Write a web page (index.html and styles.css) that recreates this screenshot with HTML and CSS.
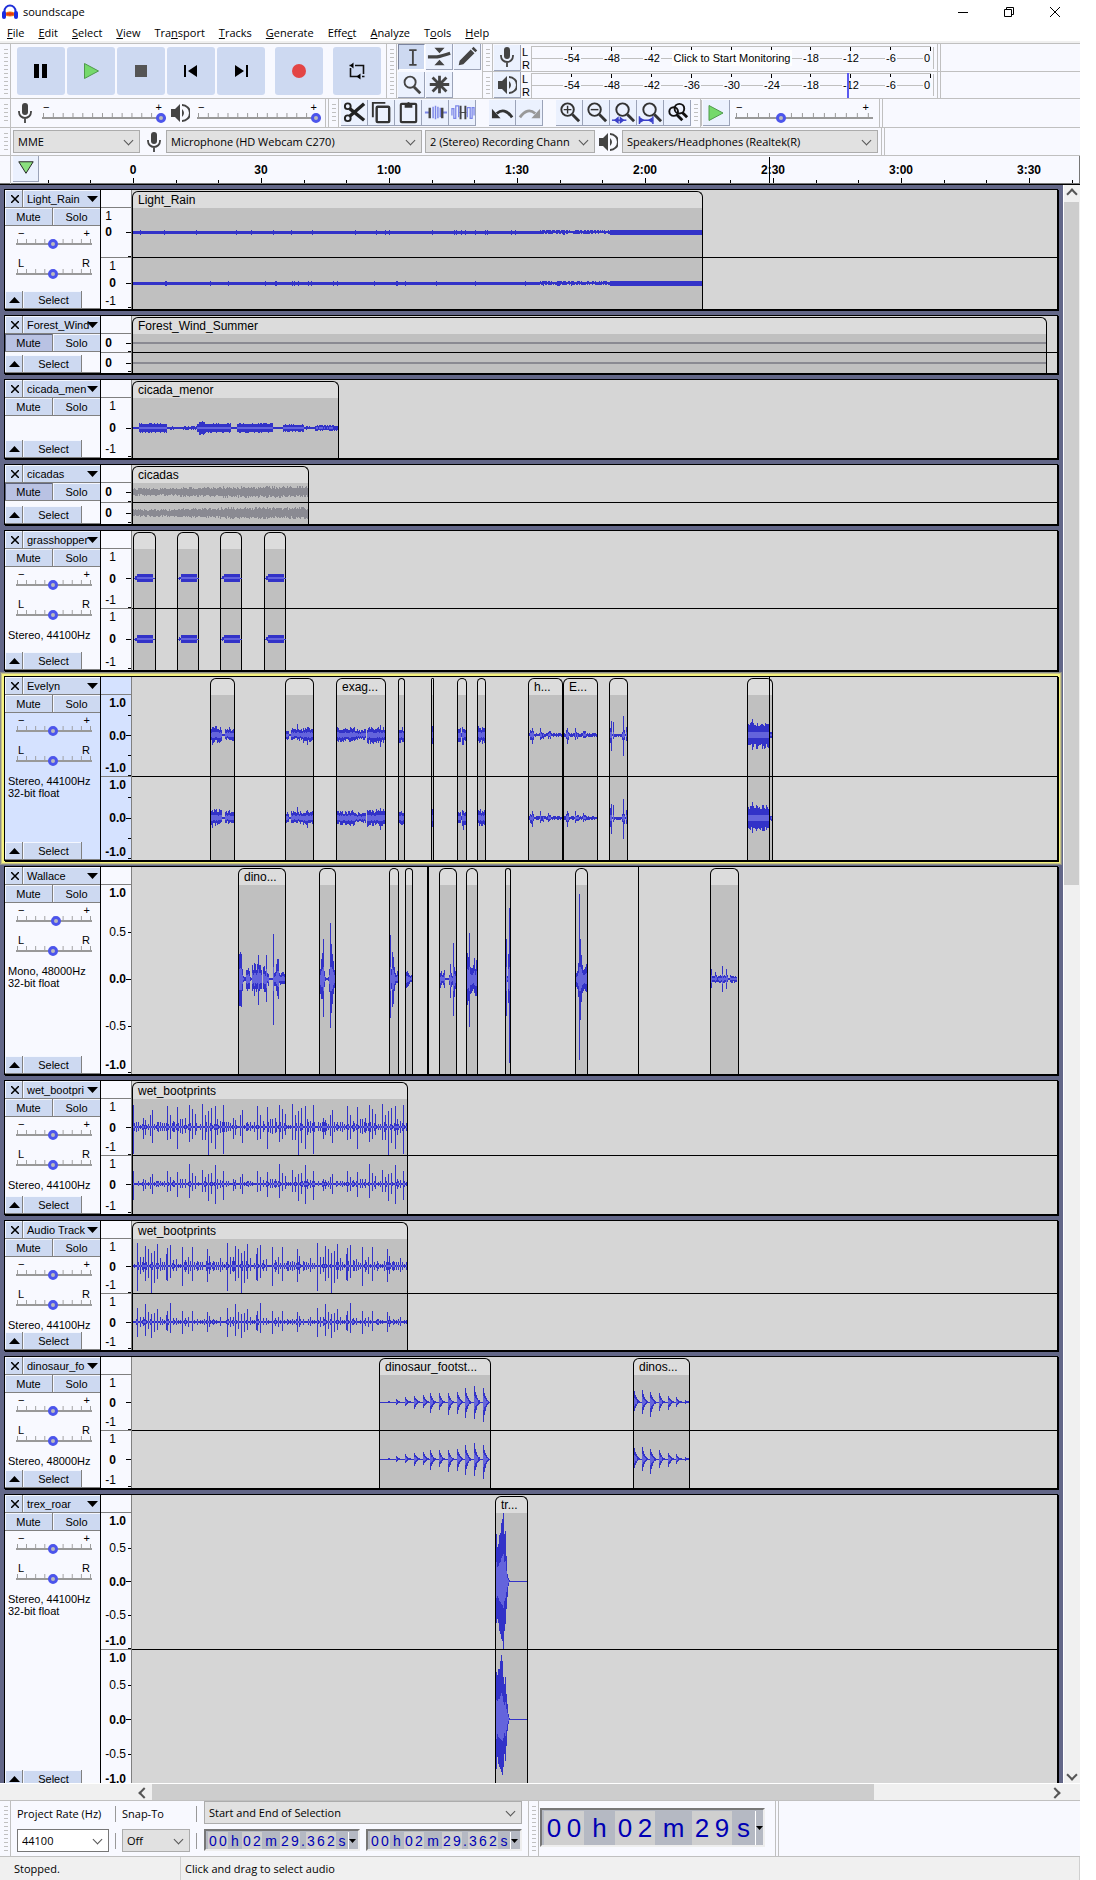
FILE: index.html
```html
<!DOCTYPE html>
<html lang="en">
<head>
<meta charset="utf-8">
<title>soundscape</title>
<link rel="stylesheet" href="styles.css">
</head>
<body>
<svg class="defs" aria-hidden="true">
  <symbol id="mic" viewBox="0 0 16 22"><rect x="5" y="1" width="6" height="12" rx="3" fill="#444"/><path d="M2 9v1a6 6 0 0 0 12 0V9M8 16v5" fill="none" stroke="#444" stroke-width="1.8"/></symbol>
  <symbol id="speaker" viewBox="0 0 20 20"><path d="M1 6h4l5-5v18l-5-5H1z" fill="#444"/><path d="M12 6q4 4 0 8" fill="#444"/><path d="M12 2a8 8 0 0 1 0 16" fill="none" stroke="#444" stroke-width="2"/></symbol>
  <symbol id="play" viewBox="0 0 18 18"><path d="M2 1.500L16 9L2 16.500z" fill="#75d96b" stroke="#4f9a4c"/></symbol>
  <symbol id="lens" viewBox="0 0 26 26"><circle cx="11" cy="10" r="6.500" fill="none" stroke="#333" stroke-width="2"/><path d="M16 15l7 7" stroke="#333" stroke-width="3"/></symbol>
</svg>
<div class="app">
  <header class="titlebar">
    <svg class="logo" viewBox="0 0 16 16"><path d="M2.500 9V7a5.500 5.500 0 0 1 11 0v2" fill="none" stroke="#1f2fd8" stroke-width="2"/><ellipse cx="8" cy="10" rx="5" ry="2.500" fill="#f58a1c"/><path d="M4 10h8M6 8.500v3M8 8v4M10 8.500v3" stroke="#e02010"/><rect x="0" y="7" width="4" height="8" rx="2" fill="#1a2be0"/><rect x="12" y="7" width="4" height="8" rx="2" fill="#1a2be0"/></svg>
    <h1>soundscape</h1>
    <div class="winbtns">
      <button aria-label="Minimize"><svg viewBox="0 0 12 12"><path d="M1 6.500h10"/></svg></button>
      <button aria-label="Restore"><svg viewBox="0 0 12 12"><path d="M1.500 3.500h7v7h-7zM3.500 3.500v-2h7v7h-2"/></svg></button>
      <button aria-label="Close"><svg viewBox="0 0 12 12"><path d="M1 1l10 10M11 1L1 11"/></svg></button>
    </div>
  </header>
  <nav class="menu">
    <a href="#"><u>F</u>ile</a><a href="#"><u>E</u>dit</a><a href="#"><u>S</u>elect</a><a href="#"><u>V</u>iew</a><a href="#">Tra<u>n</u>sport</a><a href="#"><u>T</u>racks</a><a href="#"><u>G</u>enerate</a><a href="#">Effe<u>c</u>t</a><a href="#"><u>A</u>nalyze</a><a href="#">T<u>o</u>ols</a><a href="#"><u>H</u>elp</a>
  </nav>

  <div class="bar bar-main">
    <i class="grip"></i>
    <div class="transport">
      <button aria-label="Pause"><svg viewBox="0 0 48 48"><path d="M17 17h5v14h-5zM25 17h5v14h-5z"/></svg></button>
      <button aria-label="Play"><svg viewBox="0 0 48 48"><path d="M17.500 16.500l14 7.500-14 7.500z" fill="#75d96b" stroke="#4f9a4c"/></svg></button>
      <button aria-label="Stop"><svg viewBox="0 0 48 48"><path d="M18 18h12v12H18z" fill="#555"/></svg></button>
      <button aria-label="Skip to start"><svg viewBox="0 0 48 48"><path d="M17 18h2v12h-2zM30 18v12l-9-6z"/></svg></button>
      <button aria-label="Skip to end"><svg viewBox="0 0 48 48"><path d="M29 18h2v12h-2zM18 18v12l9-6z"/></svg></button>
      <button class="apart" aria-label="Record"><svg viewBox="0 0 48 48"><circle cx="24" cy="24" r="7" fill="#e34545"/></svg></button>
      <button class="apart" aria-label="Loop"><svg viewBox="0 0 48 48"><path d="M22 18.500h8.500V27M26 29.500h-8.500V21M19 18.500h-2.500M29 29.500h2.500" fill="none" stroke="#111" stroke-width="1.600"/><path d="M20.500 15.500v6l-3.500-3zM27.500 26.500v6l-4-3z" transform="translate(0 0)"/></svg></button>
    </div>
    <i class="grip"></i>
    <div class="tools">
      <button class="on" aria-label="Selection"><svg viewBox="0 0 27 27"><path d="M11 5.500h8M11 21.500h8M15 5v17" stroke="#444" stroke-width="2" fill="none"/></svg></button>
      <button aria-label="Envelope"><svg viewBox="0 0 27 27"><path d="M8 4h11l-5.500 6zM8 23h11l-5.500-6z" fill="#444"/><path d="M1 14h10q5-1 14-4" stroke="#444" stroke-width="3.500" fill="none"/></svg></button>
      <button aria-label="Draw"><svg viewBox="0 0 27 27"><path d="M4 23l1-5L17 6l4 4L9 22zM18 5l2-2 4 4-2 2z" fill="#444"/></svg></button>
      <button aria-label="Zoom"><svg viewBox="0 0 27 27"><circle cx="12" cy="11" r="6" fill="none" stroke="#444" stroke-width="2"/><path d="M16 16l7 7" stroke="#444" stroke-width="3"/></svg></button>
      <button aria-label="Multi-tool"><svg viewBox="0 0 27 27"><path d="M13.500 4v19M3 13.500h21M6 6l15 15M21 6L6 21" stroke="#444" stroke-width="3"/></svg></button>
    </div>
    <div class="meters">
      <div class="meter">
        <i class="grip"></i>
        <button class="tool" aria-label="Recording level"><svg width="16" height="22"><use href="#mic"/></svg></button>
        <div class="lr"><span>L</span><span>R</span></div>
        <svg class="scale" data-skip="1" width="406" height="26"></svg>
        <button class="monitor">Click to Start Monitoring</button>
        <i class="ends"></i>
      </div>
      <div class="meter">
        <i class="grip"></i>
        <button class="tool" aria-label="Playback level"><svg width="20" height="20"><use href="#speaker"/></svg></button>
        <div class="lr"><span>L</span><span>R</span></div>
        <svg class="scale" width="406" height="26"></svg>
        <i class="ends"></i>
      </div>
    </div>
  </div>

  <div class="bar bar-edit">
    <i class="grip"></i>
    <div class="mixer">
      <svg width="16" height="22"><use href="#mic"/></svg>
      <label class="slider wide"><span><b>−</b><b>+</b></span><input type="range" value="100" aria-label="Recording volume"></label>
      <svg width="20" height="20"><use href="#speaker"/></svg>
      <label class="slider wide"><span><b>−</b><b>+</b></span><input type="range" value="100" aria-label="Playback volume"></label>
    </div>
    <i class="ends"></i>
    <i class="grip"></i>
    <div class="edit">
      <button class="tool" aria-label="Cut"><svg viewBox="0 0 26 26"><path d="M8 9l15 12M8 17L23 4" stroke="#222" stroke-width="3.500"/><circle cx="6" cy="6.500" r="3" fill="none" stroke="#222" stroke-width="2"/><circle cx="6" cy="19" r="3" fill="none" stroke="#222" stroke-width="2"/></svg></button>
      <button class="tool" aria-label="Copy"><svg viewBox="0 0 26 26"><path d="M4 18V3h13" stroke="#333" stroke-width="2" fill="none"/><rect x="8" y="7" width="13" height="16" rx="1" fill="none" stroke="#333" stroke-width="2.500"/></svg></button>
      <button class="tool" aria-label="Paste"><svg viewBox="0 0 26 26"><rect x="5" y="4" width="16" height="19" rx="1" fill="none" stroke="#333" stroke-width="2.200"/><path d="M9 4h2q2-4 4 0h2v4H9z" fill="#333"/></svg></button>
      <button class="tool" aria-label="Trim"><svg viewBox="0 0 26 26"><path d="M2 13h5M19 13h6" stroke="#7b86e8" stroke-width="2"/><path d="M7 8v11M20 8v11" stroke="#444" stroke-width="2.500"/><path d="M10.500 7v12M13 6v14M15.500 7v12M18 8v10" stroke="#7b86e8" stroke-width="1.500"/></svg></button>
      <button class="tool" aria-label="Silence"><svg viewBox="0 0 26 26"><path d="M10 13h7" stroke="#444"/><path d="M11 6v14M16 6v14" stroke="#444" stroke-width="2"/><path d="M2 16V9h2v10h2V6h3v12M18 18V8h3v11h2V8h2v8" fill="none" stroke="#7b86e8" stroke-width="1.300"/></svg></button>
      <button class="tool undo" aria-label="Undo"><svg viewBox="0 0 26 26"><path d="M7 14q8-7 16 4" stroke="#333" stroke-width="3" fill="none"/><path d="M2 9v10h9z" fill="#333"/></svg></button>
      <button class="tool" aria-label="Redo"><svg viewBox="0 0 26 26"><path d="M19 14q-8-7-16 4" stroke="#999" stroke-width="3" fill="none"/><path d="M24 9v10h-9z" fill="#999"/></svg></button>
      <button class="tool undo" aria-label="Zoom in"><svg viewBox="0 0 26 26"><use href="#lens"/><path d="M7 10h8M11 6v8" stroke="#333" stroke-width="1.500"/></svg></button>
      <button class="tool" aria-label="Zoom out"><svg viewBox="0 0 26 26"><use href="#lens"/><path d="M7 10h8" stroke="#333" stroke-width="1.500"/></svg></button>
      <button class="tool" aria-label="Fit selection"><svg viewBox="0 0 26 26"><use href="#lens" x="1"/><path d="M1 21h15" stroke="#3a3fc8" stroke-width="1.500"/><path d="M8 17v8l-5-4zM9 17v8l5-4z" fill="#3a3fc8"/></svg></button>
      <button class="tool" aria-label="Fit project"><svg viewBox="0 0 26 26"><use href="#lens" x="1"/><path d="M2 21h13M1.500 17v8M15.500 17v8" stroke="#3a3fc8" stroke-width="1.500"/><path d="M2 18l5 3-5 3zM15 18l-5 3 5 3z" fill="#3a3fc8"/></svg></button>
      <button class="tool" aria-label="Zoom toggle"><svg viewBox="0 0 26 26"><circle cx="9" cy="12" r="4.500" fill="none" stroke="#111" stroke-width="2"/><circle cx="15" cy="9" r="5" fill="none" stroke="#111" stroke-width="2"/><path d="M12 15l6 6M18 13l5 5" stroke="#111" stroke-width="3"/></svg></button>
    </div>
    <i class="grip"></i>
    <div class="speed">
      <button class="tool" aria-label="Play at speed"><svg width="18" height="18"><use href="#play"/></svg></button>
      <label class="slider wide"><span><b>−</b><b>+</b></span><input type="range" value="32" aria-label="Playback speed"></label>
    </div>
    <i class="ends"></i>
  </div>

  <div class="bar bar-device">
    <i class="grip"></i>
    <span class="pick host"><select aria-label="Audio host"><option>MME</option></select></span>
    <svg width="16" height="22"><use href="#mic"/></svg>
    <span class="pick dev"><select aria-label="Recording device"><option>Microphone (HD Webcam C270)</option></select></span>
    <span class="pick chan"><select aria-label="Recording channels"><option>2 (Stereo) Recording Chann</option></select></span>
    <svg width="20" height="20"><use href="#speaker"/></svg>
    <span class="pick dev"><select aria-label="Playback device"><option>Speakers/Headphones (Realtek(R)</option></select></span>
    <i class="ends"></i>
  </div>

  <div class="timeline">
    <i class="stub"></i>
    <button class="tool pin" aria-label="Pinned play head"><svg viewBox="0 0 26 26"><path d="M6 6h15l-7.500 12z" fill="#8be07f" stroke="#222"/></svg></button>
    <svg class="ruler" id="ruler" height="27"></svg>
  </div>

  <main class="workspace">
    <div class="tracks" id="tracks"></div>
    <div class="vscroll"><i class="arrow up"></i><i class="thumb"></i><i class="arrow down"></i></div>
  </main>
  <div class="hscroll"><i class="arrow left"></i><i class="thumb"></i><i class="arrow right"></i></div>

  <div class="selection">
    <i class="grip"></i>
    <div class="setup">
      <label for="rate">Project Rate (Hz)</label><i class="bar-v"></i><label for="snap">Snap-To</label><i class="bar-v"></i>
      <span class="pick field"><input id="rate" type="text" value="44100"></span><i class="bar-v"></i><span class="pick"><select id="snap"><option>Off</option></select></span><i class="bar-v"></i>
    </div>
    <div class="range">
      <span class="pick"><select aria-label="Selection mode"><option>Start and End of Selection</option></select></span>
      <div class="times"><div class="time small" data-t="00|h|02|m|29|.|362|s"></div><div class="time small" data-t="00|h|02|m|29|.|362|s"></div></div>
    </div>
    <i class="grip framed"></i>
    <div class="time big" data-t="00|h|02|m|29|s"></div>
    <i class="ends"></i>
  </div>
  <footer class="status"><span></span><span>Stopped.</span><span>Click and drag to select audio</span></footer>
</div>
<script src="app.js"></script>
</body>
</html>
```
FILE: styles.css
```css
* { box-sizing: border-box; }
body { margin: 0; background: #fff; color: #000; font: 11px/14px "Open Sans", "Noto Sans", sans-serif; }
button, select, input { font: inherit; color: inherit; margin: 0; padding: 0; border: 0; background: none; border-radius: 0; }
button { display: flex; align-items: center; justify-content: center; }
svg { display: block; flex: none; }
.defs { position: absolute; width: 0; height: 0; }
.app { display: flex; flex-direction: column; height: 100vh; margin-right: 16px; }

.titlebar { display: flex; align-items: center; height: 24px; padding-left: 2px; gap: 5px; }
.titlebar h1 { margin: 0; font-size: 11px; font-weight: 400; flex: 1; }
.logo { width: 16px; height: 16px; }
.winbtns { display: flex; padding-right: 2px; }
.winbtns button { width: 46px; height: 20px; }
.winbtns svg { width: 12px; height: 12px; fill: none; stroke: #000; }
.menu { display: flex; gap: 14px; height: 20px; padding: 0 7px; border-bottom: 1px solid #c0c0c0; box-shadow: inset 0 -2px #f0f0f0; line-height: 18px; }
.menu a { color: #000; text-decoration: none; }

.bar { display: flex; align-items: center; background: #f8f9ff; border-bottom: 1px solid #c0c0c0; }
.grip { flex: none; align-self: stretch; width: 10px; border-right: 1px solid #c0c0c0; background: repeating-linear-gradient(#c0c0c0 0 1px, transparent 1px 4px) content-box; padding: 5px 2px 3px 3px; }
.ends { flex: none; align-self: stretch; width: 4px; border: solid #c0c0c0; border-width: 0 1px; }
.bar > .grip:first-child, .selection > .grip:first-child { width: 11px; padding-left: 4px; }

.bar-main { height: 55px; }
.transport { display: flex; gap: 2px; padding: 0 5px 1px 6px; border-right: 1px solid #c0c0c0; align-self: stretch; align-items: center; }
.transport button { width: 48px; height: 48px; border-radius: 3px; background: #cdd9f1; }
.transport .apart { margin-left: 8px; }
.transport svg { width: 48px; height: 48px; }
.tools { display: grid; grid-template-columns: repeat(3, 27px); gap: 1px; padding: 0 1px; border-right: 1px solid #c0c0c0; align-self: stretch; }
.tools button, .tool { height: 26px; background: #ebf1fe; border-right: 1px solid #9ba3b8; border-bottom: 1px solid #9ba3b8; }
.tools button.on { background: #cdd9f1; border: 1px solid; border-color: #7b849e #fff #fff #7b849e; }
.tools svg { width: 25px; height: 25px; }
.tool { flex: none; width: 27px; }
.meters { flex: 1; align-self: stretch; display: flex; flex-direction: column; }
.meter { display: flex; height: 28px; align-items: center; position: relative; }
.meter:first-child { border-bottom: 1px solid #c0c0c0; }
.meter:last-child { height: 26px; }
.meter .grip { margin-right: 1px; }
.meter .grip + .tool { margin-right: -1px; }
.lr { width: 11px; padding-left: 2px; display: flex; flex-direction: column; font: 11px/14px "Liberation Sans", sans-serif; }
.lr span { height: 13px; }
.scale { font: 11px "Liberation Sans", sans-serif; }
.monitor { position: absolute; left: 189px; top: 6px; width: 120px; height: 16px; background: #fff; font: 11px "Liberation Sans", sans-serif; white-space: nowrap; }

.bar-edit { height: 29px; }
.mixer, .speed { display: flex; align-items: center; }
.mixer { padding: 0 4px 0 6px; gap: 4px; }
.mixer > svg { margin-right: 3px; }
.mixer > svg:first-child { margin-right: 5px; }
.slider { display: flex; flex-direction: column; width: 76px; }
.slider.wide { width: 124px; }
.slider span { display: flex; justify-content: space-between; height: 9px; padding: 0 2px; font: 11px/9px "Liberation Sans", sans-serif; }
.slider b { font-weight: 400; }
.slider.wide span { padding: 0 4px 0 1px; }
.slider input { appearance: none; width: 100%; height: 12px; background:
  linear-gradient(#999, #999) 0 5px / 100% 2px no-repeat,
  linear-gradient(90deg, #999 1px, transparent 1px) 1px 1px / calc((100% - 3px) / 8) 4px repeat-x; }
.slider.wide input { background-size: 100% 2px, calc((100% - 6px) / 12) 4px; }
.slider input::-webkit-slider-thumb { appearance: none; width: 10px; height: 10px; border: 3px solid #4c55ec; border-radius: 50%; background: #bbb; }
.edit { display: flex; padding-left: 2px; }
.edit svg { width: 25px; height: 25px; }
.edit .undo { margin-left: 13px; }
.speed { padding: 0 6px 0 1px; gap: 5px; border-left: 1px solid #c0c0c0; }
.speed .slider { width: 138px; }

.bar-device { height: 28px; }
.pick { position: relative; display: flex; height: 23px; border: 1px solid #acacac; background: #e1e1e1; }
.pick::after { content: ""; position: absolute; right: 7px; top: 6px; width: 6px; height: 6px; border: solid #555; border-width: 0 1px 1px 0; transform: rotate(45deg); pointer-events: none; }
.pick select, .pick input { appearance: none; flex: 1; width: 100%; padding: 0 20px 0 4px; }
.pick.field { background: #fff; border-color: #777; }
.bar-device .host { width: 127px; margin: 0 6px 0 2px; }
.bar-device .dev { width: 256px; margin: 0 3px 0 4px; }
.bar-device .chan { width: 170px; margin-right: 3px; }

.timeline { display: flex; height: 29px; background: #f8f9ff; border-bottom: 1px solid #000; box-shadow: inset 0 -1px #777, inset -1px 0 #777; }
.stub { width: 11px; border-right: 1px solid #c0c0c0; margin-right: 2px; }
.pin { width: 26px; }
.pin svg { width: 25px; height: 25px; }
.ruler { flex: 1; font: bold 12px "Liberation Sans", sans-serif; text-anchor: middle; overflow: hidden; min-width: 0; }

.workspace { flex: 1; min-height: 0; display: flex; background: #636788; }
.tracks { flex: 1; min-width: 0; overflow: hidden; padding: 4px 5px 0 4px; display: flex; flex-direction: column; gap: 5px; font: 11px/12px "Liberation Sans", sans-serif; }
.track { flex: none; display: flex; border: 1px solid #000; box-shadow: 1px 1px #000; background: #f8f9ff; }
.track.focused { background: #d5e2ff; box-shadow: 1px 1px #000, 0 0 0 2px #f6f37f, 0 0 0 3px #c6c287, 0 0 0 4px #8e8f8b; }
.panel { width: 96px; border-right: 1px solid #000; display: flex; flex-direction: column; }
.panel button { background: #cdd9f1; height: 17px; border: solid #808080; border-width: 0 1px 0 0; box-shadow: inset 1px 1px #f4f7ff; }
.head { display: flex; border-bottom: 1px solid #808080; }
.panel .close { width: 18px; padding-left: 2px; }
.panel .name { flex: 1; min-width: 0; justify-content: flex-start; padding-left: 4px; position: relative; overflow: hidden; white-space: nowrap; border-right: 0; }
.name svg { position: absolute; right: 2px; top: 6px; }
.ms { display: flex; border-bottom: 1px solid #808080; }
.ms button { flex: 1; }
.ms button:last-child { border-right: 0; }
.panel .down { background: #b9c2e3; box-shadow: inset 1px 1px #60657c; }
.sliders { display: flex; flex-direction: column; gap: 9px; padding: 3px 0 0 11px; }
.info { margin: 8px 0 0 3px; white-space: pre; }
.foot { display: flex; margin-top: auto; border-bottom: 1px solid #808080; }
.foot .collapse { width: 18px; padding-left: 2px; }
.foot .select { width: 59px; padding-left: 3px; }
.axis { width: 31px; border-right: 1px solid #808080; font-size: 12px; }
.lane { flex: 1; min-width: 0; position: relative; overflow: hidden; background: #d6d6d6; }
.clip { position: absolute; top: 1px; bottom: 0; border: 1px solid #000; border-bottom: 0; border-radius: 6px 6px 0 0; background: linear-gradient(#dcdcdc 16px, #c0c0c0 16px); padding-left: 5px; font-size: 12px; line-height: 16px; white-space: nowrap; overflow: hidden; }
.clip.thin { padding: 0; }
.mark { position: absolute; top: 0; bottom: 0; background: #000; }
.wave { position: absolute; left: 0; top: 0; width: 100%; height: 100%; fill: none; shape-rendering: crispEdges; }
.split { position: absolute; left: 0; right: 0; height: 1px; background: #000; }

.vscroll { width: 17px; border-left: 1px solid #fff; background: #f0f0f0; display: flex; flex-direction: column; }
.arrow { flex: none; width: 16px; height: 17px; display: flex; align-items: center; justify-content: center; }
.arrow::after { content: ""; width: 6px; height: 6px; border: solid #555; border-width: 2px 0 0 2px; }
.up::after { transform: rotate(45deg); }
.down.arrow::after { transform: rotate(225deg); }
.left::after { transform: rotate(-45deg); }
.right::after { transform: rotate(135deg); }
.vscroll .thumb { flex: 683; background: #cdcdcd; margin-right: 1px; }
.vscroll::after { content: ""; flex: 881; order: 1; }
.vscroll .down { order: 2; }
.hscroll { display: flex; height: 17px; background: #f0f0f0; padding: 0 17px 0 136px; border-top: 1px solid #fff; }
.hscroll .thumb { flex: 721; background: #cdcdcd; }
.hscroll::after { content: ""; flex: 173; order: 1; }
.hscroll .right { order: 2; }

.selection { display: flex; align-items: flex-start; height: 57px; background: #f8f9ff; border: solid #c0c0c0; border-width: 1px 0; }
.setup { display: grid; grid-template-columns: 92px 1px 68px 1px; column-gap: 6px; row-gap: 2px; padding: 0 7px 0 6px; align-items: center; font-size: 11px; }
.setup label { line-height: 26px; white-space: nowrap; }
.setup .field { grid-column: 1; }
.bar-v { height: 16px; background: #999; }
.range { display: flex; flex-direction: column; gap: 5px; padding-right: 6px; }
.times { display: flex; gap: 6px; }
.framed { border-left: 1px solid #c0c0c0; width: 11px; }
.time { display: flex; background: #b5b9c3; border: 2px solid; border-color: #777 #eee #eee #777; color: #0000b4; font-family: "Liberation Sans", sans-serif; padding: 1px 0 0 2px; }
.time .num { display: flex; background: #cfcfcf; }
.time span span { text-align: center; }
.time button { width: 8px; border-left: 1px solid #fff; }
.small { width: 156px; height: 22px; font-size: 14px; line-height: 18px; }
.small .num span { width: 10px; }
.small .unit { width: 14px; text-align: center; }
.small .unit.m { width: 18px; }
.small .unit.dot { width: 6px; }
.small .unit.s { width: 12px; }
.big { width: 225px; height: 39px; margin: 7px 10px 0 1px; font-size: 26px; line-height: 34px; }
.big .num span { width: 20px; }
.big .unit { width: 31px; text-align: center; }
.big .unit.m { width: 37px; }
.big .unit.s { width: 23px; }
.status { display: flex; height: 23px; background: #f0f0f0; align-items: center; line-height: 23px; }
.status span { padding-left: 4px; border-right: 1px solid #d0d0d0; }
.status span:nth-child(1) { width: 10px; }
.status span:nth-child(2) { width: 171px; }
.status span:nth-child(3) { flex: 1; }
```
FILE: app.js
```js
// Left edge of the waveform lanes; clip data below is in window pixels.
const ORIGIN = 132;
const BLUE = ['#3232c8', '#6464dc'];
const GREY = ['#8a8a92', '#8a8a92'];

let seed = 7;
function rnd() { seed = (seed * 16807) % 2147483647; return seed / 2147483647; }

// Segment: [x0, x1, up, down, jitter]; later segments replace earlier columns.
function columns(segs) {
  const cols = new Map();
  for (const [x0, x1, up, down, jit = 0.45] of segs) {
    for (let x = x0; x < x1; x++) {
      const j = x1 - x0 > 1 ? 1 - jit * rnd() : 1;
      const k = x1 - x0 > 1 ? 1 - jit * rnd() : 1;
      cols.set(x, [up * j, down * k]);
    }
  }
  return cols;
}
function draw(cols, centre, top, colours, cap = 12) {
  let outer = '', inner = '';
  for (const [x, [u, d]] of cols) {
    const px = x - ORIGIN + 0.5, c = centre - top - 1;
    outer += `M${px} ${c - Math.round(u)}V${c + Math.max(1, Math.round(d))}`;
    if (u + d > 5) inner += `M${px} ${c - Math.round(Math.min(u * 0.4, cap))}V${c + Math.max(1, Math.round(Math.min(d * 0.4, cap)))}`;
  }
  return `<path d="${outer}" stroke="${colours[0]}"/><path d="${inner}" stroke="${colours[1]}"/>`;
}

function rain() {
  const out = [[133, 540, 1, 2, 0], [540, 610, 2, 2, 0.4], [610, 702, 2, 3, 0.1]];
  for (let i = 0; i < 26; i++) { const x = 140 + Math.floor(rnd() * 460); out.push([x, x + 1, 2, 3]); }
  return out;
}
function bootprints(list, scale) {
  const out = [[133, 407, 1, 1, 0]];
  for (let x = 134; x < 407; x += 2) { const a = (1 + rnd() * 4) * scale; out.push([x, x + 1, a, a]); }
  for (let p = -90; p < 280; p += 90) for (const [x, u, d, big] of list) {
    const px = Math.round(x / 3) + p, s = scale < 1 && big ? 0.9 : scale;
    if (px > 132 && px < 407) out.push([px, px + 1, u * s, d * s]);
  }
  return out;
}
const STEPS_A = [[415,5,4],[430,9,12],[436,7,8],[450,12,9],[457,17,16],[470,5,4],[481,5,4],[502,21,13],[511,12,12],[520,6,5],[532,20,22],[541,8,6],[547,8,7],[555,9,6],[568,22,15,1],[577,18,12],[586,13,8],[607,23,13],[616,12,13],[625,16,28],[634,19,16],[644,21,22,1],[652,8,8],[660,6,6],[668,22,27]];
const STEPS_B = [[412,23,25],[421,9,8],[430,9,6],[436,20,15,1],[445,17,12],[454,13,27],[463,15,17],[472,22,13],[481,8,5],[497,12,14],[502,18,15],[511,21,12,1],[520,6,5],[529,7,5],[547,19,20],[556,6,6],[565,9,8],[577,19,15],[592,5,5],[622,17,16],[628,10,8],[640,5,5],[661,8,6]];
function footsteps(start, end, hits) {
  const out = [[start, end, 0, 1, 0]];
  for (const [x, u, d] of hits) [1, 0.65, 0.45, 0.25, 0.15, 0.1].forEach((k, i) => { if (x + i < end) out.push([x + i, x + i + 1, u * k, d * k]); });
  return out;
}
function list(x, ups, downs) { return ups.map((u, i) => [x + i, x + i + 1, u, downs[i]]); }
const chirps = [133, 177, 220, 264].flatMap(x => [[x + 1, x + 22, 0, 1, 0], [x + 2, x + 5, 2, 2], [x + 4, x + 20, 4, 4, 0.1]]);
const speech = [
  [211,222,9,8],[212,213,8,10],[222,225,1,1],[225,234,7,6],[229,230,8,5],
  [286,289,6,6],[289,291,1,1],[291,303,7,6],[297,298,11,5],[303,313,8,8],[307,308,8,10],
  [337,355,8,8],[355,366,6,5],[367,385,9,9],[380,381,10,12],[399,404,8,8],[432,433,9,9],
  [458,461,8,8],[461,462,2,2],[462,464,10,15],[464,466,8,8],[478,485,9,9],
  [529,562,2,2],[530,534,5,6],[532,533,7,9],[540,541,7,5],[541,544,3,4],[548,551,5,4],
  [564,597,2,2],[566,569,6,6],[567,568,7,9],[575,576,7,5],[576,579,3,4],[583,586,5,4],
  [610,627,1,2],[610,612,10,10],[611,612,14,16],[613,614,13,4],[622,625,5,6],[623,624,19,21],[626,627,8,6],
  [748,770,13,14,0.35],[752,753,16,15],[770,772,3,3]];
const wallace = [
  [239,242,27,29,0.1],[242,243,10,12],[243,246,3,3],[246,250,13,13],[250,252,2,2],[252,262,16,17],[258,259,24,26],[263,267,14,15],[266,267,24,23],[267,269,7,7],[269,273,1,1],[273,274,45,46],[274,276,8,8],[276,277,15,12],[277,279,22,20,0.2],[279,285,8,7],
  ...list(320,[10,20,26,40,8,2,1,1,2,10,56,35,25,18,9],[15,20,20,38,8,2,1,1,2,13,49,34,25,15,9]),
  ...list(390,[44,10,27,22,12,6,4,8],[39,10,28,25,12,6,4,4]),...list(406,[7,8,6,4,3,4],[9,8,7,5,3,3]),
  ...list(440,[6,8,4,6,9,1,1,1,1,4,15,6,3,36,12,8],[9,6,4,6,9,1,1,1,1,6,19,8,6,37,18,10]),
  ...list(467,[26,22,46,12,11,11,14,21,10,19],[26,22,48,15,14,12,10,14,17,17]),
  ...list(506,[40,3,25,71],[37,3,24,84]),
  ...list(576,[6,8,16,85,40,24,14,9,10,12,15],[8,10,18,81,41,23,14,12,10,12,13]),
  [711,737,4,4],[711,712,10,9],[715,716,7,4],[722,723,13,13],[726,727,10,10],[728,730,1,1]];
const STEPS_1 = [[388,1,1],[396,3,3],[405,5,4],[414,6,7],[423,7,6],[430,9,11],[439,9,8],[448,9,13],[457,10,12],[465,14,16],[474,16,17],[483,14,20]];
const STEPS_2 = [[634,11,9],[642,12,12],[650,10,15],[659,9,9],[668,6,8],[676,5,5],[685,2,2]];
const stomp = [...footsteps(380, 490, STEPS_1), ...footsteps(634, 689, STEPS_2)];
const tail = [[508, 527, 0, 1, 0]];
const roar1 = [...tail, ...list(496,[47,34,37,46,48,58,62,68,47,50,25,7,3,1],[42,38,42,50,53,58,60,68,50,43,28,16,5,1])];
const roar2 = [...tail, ...list(496,[47,44,50,50,58,64,58,42,35,42,25,15,5,1],[50,38,45,48,50,53,56,48,35,42,27,12,5,1])];

// axis: [label, y, bold]; zeros: centre line of each channel; cap: tallest RMS half-height.
const tracks = [
  { name:'Light_Rain', top:189, h:121, sliders:1, split:257, right:116, axis:[['1',216],['0',232,1],['1',266],['0',283,1],['-1',301]], zeros:[232,283], clips:[[132,702,'Light_Rain']], waves:[rain(), rain()] },
  { name:'Forest_Wind', top:315, h:59, mute:1, split:352, right:112, axis:[['0',343,1],['0',363,1]], zeros:[343,363], clips:[[132,1046,'Forest_Wind_Summer']], waves:[[[133,1046,1,1,0]],[[133,1046,1,1,0]]] },
  { name:'cicada_men', top:379, h:80, right:116, axis:[['1',406],['0',428,1],['-1',449]], zeros:[428], cap:1, clips:[[132,338,'cicada_menor']], waves:[[[133,338,1,1,0],[139,167,5,5,.3],[170,174,2,2],[183,197,2,2],[197,231,5,5,.3],[199,205,7,7,.2],[237,273,5,5,.3],[283,304,4,4,.3],[305,310,2,2],[315,338,3,3,.3]]] },
  { name:'cicadas', top:464, h:61, mute:1, split:502, right:112, axis:[['0',492,1],['0',513,1]], zeros:[492,513], clips:[[132,308,'cicadas']], waves:[0,1].map(() => [[133,180,4,4],[180,220,5,5],[220,308,6,6]]) },
  { name:'grasshopper', top:530, h:141, sliders:1, info:'Stereo, 44100Hz', split:608, right:116, axis:[['1',557],['0',579,1],['-1',600],['1',617],['0',639,1],['-1',662]], zeros:[578,639], cap:1, clips:[[133,155],[177,198],[220,241],[264,285]], waves:[chirps,chirps] },
  { name:'Evelyn', top:676, h:185, focus:1, sliders:1, info:'Stereo, 44100Hz\n32-bit float', split:776, right:126, axis:[['1.0',703,1],['0.0',736,1],['-1.0',768,1],['1.0',785,1],['0.0',818,1],['-1.0',852,1]], ticks:[715,755,797,838], zeros:[735,818], cap:3, clips:[[210,234],[285,313],[336,385,'exag...'],[398,404],[431,433],[457,466],[477,485],[528,562,'h...'],[563,597,'E...'],[609,627],[747,772]], marks:[[769,1]], waves:[speech,speech] },
  { name:'Wallace', top:866, h:209, gain:53, sliders:1, info:'Mono, 48000Hz\n32-bit float', right:126, axis:[['1.0',893,1],['0.5',932],['0.0',979,1],['-0.5',1026],['-1.0',1065,1]], ticks:[932,1026], zeros:[979], clips:[[238,285,'dino...'],[319,335],[389,398],[405,412],[439,456],[466,477],[505,510],[575,587],[710,738]], marks:[[427,2],[638,1]], waves:[wallace] },
  { name:'wet_bootpri', top:1080, h:135, sliders:1, info:'Stereo, 44100Hz', split:1155, right:116, axis:[['1',1107],['0',1128,1],['-1',1147],['1',1164],['0',1185,1],['-1',1206]], zeros:[1127,1184], cap:1, clips:[[132,407,'wet_bootprints']], waves:[bootprints(STEPS_A,1),bootprints(STEPS_A,.6)] },
  { name:'Audio Track', top:1220, h:131, sliders:1, info:'Stereo, 44100Hz', split:1293, right:116, axis:[['1',1247],['0',1267,1],['-1',1285],['1',1302],['0',1323,1],['-1',1342]], zeros:[1266,1322], cap:1, clips:[[132,407,'wet_bootprints']], waves:[bootprints(STEPS_B,1),bootprints(STEPS_B,.6)] },
  { name:'dinosaur_fo', top:1356, h:133, sliders:1, info:'Stereo, 48000Hz', split:1430, right:116, axis:[['1',1383],['0',1403,1],['-1',1422],['1',1439],['0',1460,1],['-1',1480]], zeros:[1402,1459], clips:[[379,490,'dinosaur_footst...'],[633,689,'dinos...']], waves:[stomp,stomp] },
  { name:'trex_roar', top:1494, h:295, sliders:1, info:'Stereo, 44100Hz\n32-bit float', split:1649, right:126, axis:[['1.0',1521,1],['0.5',1548],['0.0',1582,1],['-0.5',1615],['-1.0',1641,1],['1.0',1658,1],['0.5',1685],['0.0',1720,1],['-0.5',1754],['-1.0',1779,1]], ticks:[1548,1615,1685,1754], zeros:[1581,1719], cap:28, clips:[[495,527,'tr...']], waves:[roar1,roar2] }
];

function slider(left, right, value, label) {
  return `<label class="slider"><span><b>${left}</b><b>${right}</b></span><input type="range" value="${value}" aria-label="${label}"></label>`;
}
function axis(t) {
  const y = v => v - t.top - 1;
  let s = `<svg class="axis" height="${t.h - 2}" shape-rendering="crispEdges">`;
  s += `<path stroke="#808080" d="M0 17.5H30${t.split ? `M0 ${y(t.split) + .5}H30` : ''}"/>`;
  let d = '';
  for (const z of t.zeros) d += `M25 ${y(z) + .5}H30`;
  for (const k of t.ticks || []) d += `M27 ${y(k) + .5}H30`;
  if (t.split) d += `M27 ${y(t.split) - .5}H30`;
  d += `M27 ${t.h - 3.5}H30`;
  s += `<path stroke="#000" d="${d}"/>`;
  for (const [label, v, bold] of t.axis) {
    const right = t.name === 'Light_Rain' && v < t.split ? 112 : t.right;
    s += `<text x="${right - 101}" y="${y(v) + 4}" text-anchor="end"${bold ? ' font-weight="bold"' : ''}>${label}</text>`;
  }
  return s + '</svg>';
}
document.getElementById('tracks').innerHTML = tracks.map(t => `
<section class="track${t.focus ? ' focused' : ''}" style="height:${t.h}px">
  <div class="panel">
    <div class="head">
      <button class="close" aria-label="Close ${t.name}"><svg width="8" height="8"><path d="M0 0L8 8M8 0L0 8" stroke="#000" stroke-width="1.500"/></svg></button>
      <button class="name">${t.name}<svg width="11" height="6"><path d="M0 0H11L5.500 6z"/></svg></button>
    </div>
    <div class="ms"><button class="${t.mute ? 'down' : ''}">Mute</button><button>Solo</button></div>
    ${t.sliders ? `<div class="sliders">${slider('−', '+', t.gain || 48, 'Gain')}${slider('L', 'R', 48, 'Pan')}</div>` : ''}
    ${t.info ? `<div class="info">${t.info}</div>` : ''}
    <div class="foot"><button class="collapse" aria-label="Collapse"><svg width="11" height="6"><path d="M0 6H11L5.500 0z"/></svg></button><button class="select">Select</button></div>
  </div>
  ${axis(t)}
  <div class="lane">
    ${t.clips.map(([a, b, name = '']) => `<div class="clip${name ? '' : ' thin'}" style="left:${a - ORIGIN}px;width:${b - a + 1}px">${name}</div>`).join('')}
    <svg class="wave">${t.waves.map((w, i) => draw(columns(w), t.zeros[i], t.top, t.mute ? GREY : BLUE, t.cap)).join('')}</svg>
    ${t.split ? `<div class="split" style="top:${t.split - t.top - 1}px"></div>` : ''}
    ${(t.marks || []).map(([x, w]) => `<div class="mark" style="left:${x - ORIGIN}px;width:${w}px"></div>`).join('')}
  </div>
</section>`).join('');

// Time ruler, drawn from x = 39; one label every 128 px, two minor ticks between.
let marks = '', labels = '';
['0', '30', '1:00', '1:30', '2:00', '2:30', '3:00', '3:30'].forEach((text, i) => {
  const x = 133 - 39 + i * 128;
  labels += `<text x="${x}" y="18">${text}</text>`;
  marks += `M${x + .5} 22V27M${x + 43.5} 24V27M${x - 42.5} 24V27`;
});
document.getElementById('ruler').innerHTML = labels + `<path d="${marks}M9.5 24V27M730.5 1V27" stroke="#000" shape-rendering="crispEdges"/>`;

document.querySelectorAll('.scale').forEach(svg => {
  let s = '<path d="M0 13.500H400M.5 1V26M0 1.500H400M402.500 2V24" stroke="#c0c0c0" fill="none"/>', d = '';
  for (let db = -54; db <= 0; db += 6) {
    const x = Math.round(400 + db * 6.64);
    d += `M${x - .5} 2V${db % 12 ? 5 : 6}`;
    if (svg.dataset.skip && db >= -36 && db <= -24) continue;
    const w = db === 0 ? 8 : db === -6 ? 12 : 18, tx = db === 0 ? x - 4 : x;
    s += `<path d="M${tx - w / 2} 13.500h${w}" stroke="#f8f9ff" stroke-width="2"/><text x="${tx}" y="17" text-anchor="middle">${db}</text>`;
  }
  s += `<path d="${d}" stroke="#000"/>`;
  if (!svg.dataset.skip) s += '<path d="M317 1V26" stroke="#5a5af0" stroke-width="2"/>';
  svg.innerHTML = s;
});

document.querySelectorAll('.time').forEach(el => {
  el.innerHTML = el.dataset.t.split('|').map(p => /\d/.test(p)
    ? `<span class="num">${[...p].map(c => `<span>${c}</span>`).join('')}</span>`
    : `<span class="unit ${p === '.' ? 'dot' : p}">${p}</span>`).join('')
    + '<button aria-label="Time format"><svg width="7" height="4"><path d="M0 0H7L3.500 4z"/></svg></button>';
});
```
